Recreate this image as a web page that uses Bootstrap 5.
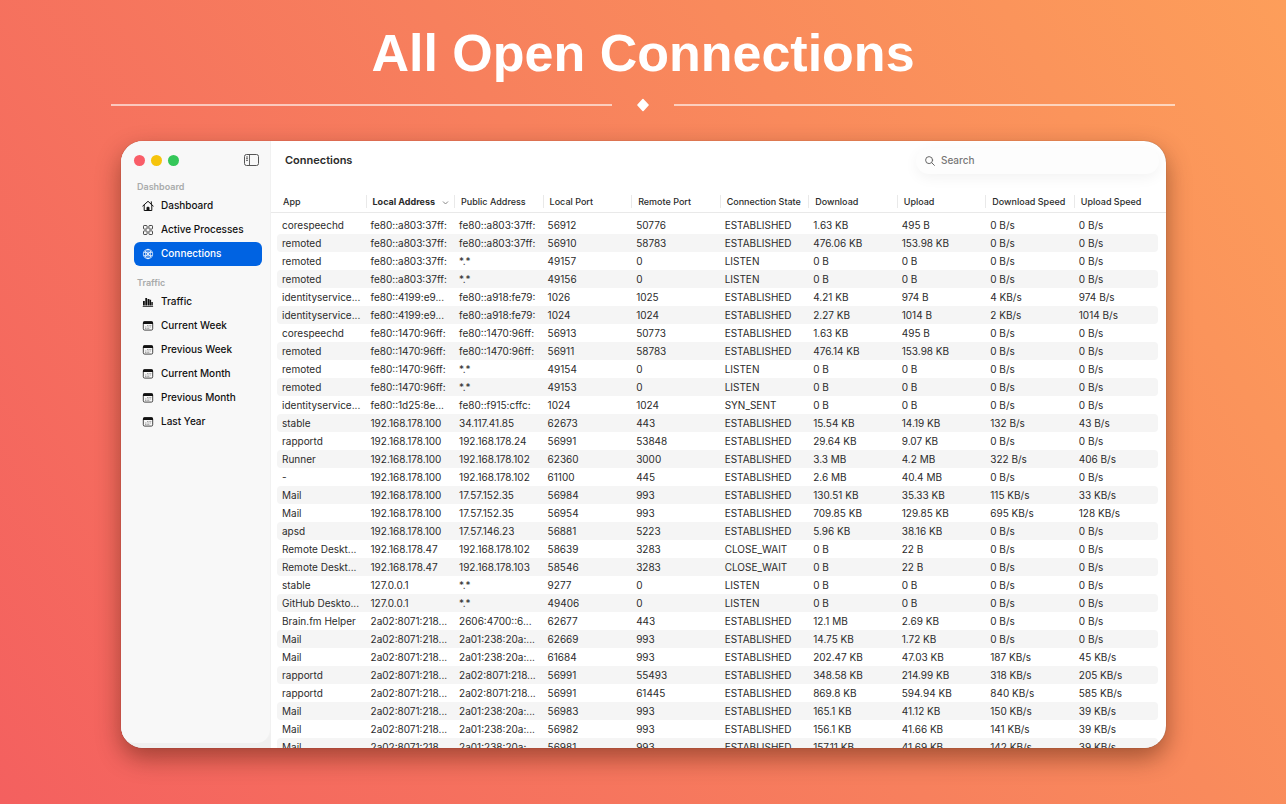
<!DOCTYPE html>
<html lang="en">
<head>
<meta charset="utf-8">
<meta name="viewport" content="width=device-width, initial-scale=1">
<title>All Open Connections</title>
<link href="https://cdn.jsdelivr.net/npm/bootstrap@5.3.0/dist/css/bootstrap.min.css" rel="stylesheet">
<style>
  body { font-family: Inter, "Liberation Sans", sans-serif; font-size: 10px; color: #2b2b2b;
    background: linear-gradient(58deg, #f4605f 0%, #f7805d 52%, #fd9e5a 100%); }
  .stage { padding: 0 120px 56px; }
  .headline { font: bold 52px/64px "Liberation Sans", sans-serif; margin: 21px 0 13px; }
  .divider { margin: 0 -9px 28px; gap: 24px; height: 15px; }
  .divider span { height: 2px; background: rgba(255,255,255,.6); }
  .app-window { border-radius: 22px; background: #fff; min-height: 0; margin-left: 1px;
    box-shadow: 0 0 1px rgba(0,0,0,.4), 0 10px 24px rgba(60,20,0,.45); }
  .sidebar-back { width: 150px; background: #f0f0f0; padding-bottom: 5px; }
  .sidebar { background: #f8f8f8; border-radius: 0 0 14px 14px; border-right: 1px solid #f1f1f1; padding: 0 8px 0 13px; }
  .side-top { height: 39px; padding-right: 3px; }
  .lights { gap: 6px; }
  .light { width: 11px; height: 11px; border-radius: 50%; }
  .light-close { background: #f95d68; }
  .light-min { background: #f6c40c; }
  .light-zoom { background: #35c759; }
  .group-label { font-size: 9px; font-weight: 600; line-height: 14px; color: #a9abab; padding-left: 3px; }
  .group-label.later { padding-top: 10px; }
  .side-link { height: 24px; border-radius: 6px; padding-left: 8px; gap: 7px; font-weight: 500; color: #111; text-decoration: none; }
  .side-link.active { background: #0063e2; color: #fff; }
  .titlebar { height: 38px; }
  .pane-title { font-size: 11px; font-weight: 600; line-height: 38px; margin: 0; padding-left: 14px; }
  .search-box { width: 243px; height: 26px; border-radius: 13px; padding: 0 9px; gap: 6px; margin: 7px 7px 0 0;
    background: #fdfdfd; box-shadow: 0 4px 14px rgba(0,0,0,.05); color: #666; }
  .search-box input { font-size: 10px; font-weight: 500; color: #666; outline: 0; }
  .search-box input::placeholder { color: #777; opacity: 1; }
  .grid-wrap { padding: 13px 8px 0 6px; background: linear-gradient(#e9e9e9, #e9e9e9) no-repeat 0 33px / 100% 1px; }
  .grid { table-layout: fixed; width: 100%; border-collapse: separate; border-spacing: 0; }
  .grid col { width: 10.05%; }
  .grid col:last-child { width: auto; }
  .grid th { height: 20px; padding: 0 0 0 6px; font-size: 9px; font-weight: 500; line-height: 20px; white-space: nowrap; }
  .grid th + th { background: linear-gradient(#e9e9e9, #e9e9e9) no-repeat 0 3px / 1px 13px; padding-left: 7px; }
  .grid th:nth-child(2) { font-weight: 700; }
  .grid th svg { float: right; margin: 8px 5px 0 0; }
  .grid tbody::before { content: ""; display: block; height: 4px; }
  .grid td { height: 18px; padding: 0 0 0 5px; line-height: 18px; white-space: nowrap; overflow: hidden; }
  .grid tbody tr:nth-child(even) td { background: #f5f5f5; }
  .grid td:first-child { border-radius: 4px 0 0 4px; }
  .grid td:last-child { border-radius: 0 4px 4px 0; }
</style>
</head>
<body>
<svg class="d-none">
  <symbol id="cal" viewBox="0 0 12 12"><rect x="1.3" y="1.7" width="9.4" height="8.4" rx="1.3" fill="none" stroke="#333" stroke-width=".9"/><path d="M1 2.6Q1.2 1.3 2.4 1.3h7.2Q10.8 1.3 11 2.6v1.5H1z" fill="#111"/><path d="M5 5.5h4.4M3 7h6.4M3 8.5h4.5" stroke="#999" stroke-width=".9" stroke-dasharray="1.1 .5"/></symbol>
</svg>
<main class="stage d-flex flex-column vh-100 overflow-hidden">
  <h1 class="headline text-white text-center">All Open Connections</h1>
  <div class="divider d-flex align-items-center">
    <span class="flex-fill"></span>
    <svg width="14" height="14" viewBox="0 0 14 14"><path d="M7 .8Q7.4.8 12.6 6.4Q13.2 7 12.6 7.6L7.6 13Q7 13.6 6.4 13L1.4 7.6Q.8 7 1.4 6.4L6.4 1z" fill="#fff"/></svg>
    <span class="flex-fill"></span>
  </div>
  <div class="app-window d-flex flex-fill overflow-hidden">
    <div class="sidebar-back d-flex flex-shrink-0">
      <nav class="sidebar flex-fill">
        <div class="side-top d-flex align-items-center">
          <div class="lights d-flex"><span class="light light-close"></span><span class="light light-min"></span><span class="light light-zoom"></span></div>
          <button class="btn p-0 border-0 ms-auto lh-1 d-flex" aria-label="Toggle sidebar"><svg width="15" height="12" viewBox="0 0 15 12" fill="none" stroke="#555"><rect x=".5" y=".5" width="14" height="11" rx="2"/><path d="M5.5.5v11M2 3h2M2 4.7h2M2 6.4h2" stroke-width=".9"/></svg></button>
        </div>
        <div class="group-label">Dashboard</div>
        <a href="#" class="side-link d-flex align-items-center"><svg width="12" height="12" viewBox="0 0 12 12" fill="none" stroke="#111"><path d="M.8 6 6 1.3 11.2 6M9.3 4V1.8M2.2 5.3v5.2h7.6V5.3" stroke-linecap="round" stroke-linejoin="round"/><path d="M5 10.5V7.3h2v3.2z" fill="#111"/></svg>Dashboard</a>
        <a href="#" class="side-link d-flex align-items-center"><svg width="12" height="12" viewBox="0 0 12 12" fill="none" stroke="#333" stroke-width=".9"><rect x="1.5" y="1.5" width="3.6" height="3.6" rx=".7"/><rect x="6.9" y="1.5" width="3.6" height="3.6" rx=".7"/><rect x="1.5" y="6.9" width="3.6" height="3.6" rx=".7"/><rect x="6.9" y="6.9" width="3.6" height="3.6" rx=".7"/></svg>Active Processes</a>
        <a href="#" class="side-link active d-flex align-items-center"><svg width="12" height="12" viewBox="0 0 12 12" fill="none" stroke="#fff" stroke-width=".7"><circle cx="6" cy="6" r="4.7"/><ellipse cx="6" cy="6" rx="2.4" ry="4.7"/><path d="M1.5 4.3Q6 5.8 10.5 4.3M1.5 7.7Q6 6.2 10.5 7.7M6 1.3v9.4M2.7 2.7l6.6 6.6M9.3 2.7 2.7 9.3"/></svg>Connections</a>
        <div class="group-label later">Traffic</div>
        <a href="#" class="side-link d-flex align-items-center"><svg width="12" height="12" viewBox="0 0 12 12" fill="#111"><path d="M1 5h1.8v4.6H1zM3.3 2h1.8v7.6H3.3zM5.6 3h1.8v6.6H5.6zM7.7 3.8h1.4v5.8H7.7zM9.4 6h1.4v3.6H9.4zM.7 9.9h10.4v.8H.7z"/></svg>Traffic</a>
        <a href="#" class="side-link d-flex align-items-center"><svg width="12" height="12"><use href="#cal"/></svg>Current Week</a>
        <a href="#" class="side-link d-flex align-items-center"><svg width="12" height="12"><use href="#cal"/></svg>Previous Week</a>
        <a href="#" class="side-link d-flex align-items-center"><svg width="12" height="12"><use href="#cal"/></svg>Current Month</a>
        <a href="#" class="side-link d-flex align-items-center"><svg width="12" height="12"><use href="#cal"/></svg>Previous Month</a>
        <a href="#" class="side-link d-flex align-items-center"><svg width="12" height="12"><use href="#cal"/></svg>Last Year</a>
      </nav>
    </div>
    <section class="flex-fill overflow-hidden">
      <header class="titlebar d-flex justify-content-between align-items-start">
        <h2 class="pane-title">Connections</h2>
        <label class="search-box d-flex align-items-center"><svg width="10" height="10" viewBox="0 0 10 10" fill="none" stroke="#666" stroke-linecap="round"><circle cx="4.1" cy="4.1" r="3.5"/><path d="M6.8 6.8 9.4 9.4"/></svg><input type="search" class="border-0 bg-transparent p-0 flex-fill" placeholder="Search" aria-label="Search"></label>
      </header>
      <div class="grid-wrap">
        <table class="grid">
          <colgroup><col><col><col><col><col><col><col><col><col><col></colgroup>
          <thead><tr><th>App</th><th>Local Address<svg width="7" height="6" viewBox="0 0 7 6" fill="none" stroke="#888"><path d="M1 1.5 3.5 4 6 1.5"/></svg></th><th>Public Address</th><th>Local Port</th><th>Remote Port</th><th>Connection State</th><th>Download</th><th>Upload</th><th>Download Speed</th><th>Upload Speed</th></tr></thead>
          <tbody id="rows"></tbody>
        </table>
      </div>
    </section>
  </div>
</main>
<script>
const E = 'ESTABLISHED', L = 'LISTEN', W = 'CLOSE_WAIT', Z = '0 B/s', f = 'fe80::a803:37ff:', g = 'fe80::1470:96ff:', h = '192.168.178.100', m = '2a02:8071:218...', n = '2a01:238:20a:...';
const data = [
['corespeechd',f,f,56912,50776,E,'1.63 KB','495 B',Z,Z],
['remoted',f,f,56910,58783,E,'476.06 KB','153.98 KB',Z,Z],
['remoted',f,'*.*',49157,0,L,'0 B','0 B',Z,Z],
['remoted',f,'*.*',49156,0,L,'0 B','0 B',Z,Z],
['identityservice...','fe80::4199:e9...','fe80::a918:fe79:',1026,1025,E,'4.21 KB','974 B','4 KB/s','974 B/s'],
['identityservice...','fe80::4199:e9...','fe80::a918:fe79:',1024,1024,E,'2.27 KB','1014 B','2 KB/s','1014 B/s'],
['corespeechd',g,g,56913,50773,E,'1.63 KB','495 B',Z,Z],
['remoted',g,g,56911,58783,E,'476.14 KB','153.98 KB',Z,Z],
['remoted',g,'*.*',49154,0,L,'0 B','0 B',Z,Z],
['remoted',g,'*.*',49153,0,L,'0 B','0 B',Z,Z],
['identityservice...','fe80::1d25:8e...','fe80::f915:cffc:',1024,1024,'SYN_SENT','0 B','0 B',Z,Z],
['stable',h,'34.117.41.85',62673,443,E,'15.54 KB','14.19 KB','132 B/s','43 B/s'],
['rapportd',h,'192.168.178.24',56991,53848,E,'29.64 KB','9.07 KB',Z,Z],
['Runner',h,'192.168.178.102',62360,3000,E,'3.3 MB','4.2 MB','322 B/s','406 B/s'],
['-',h,'192.168.178.102',61100,445,E,'2.6 MB','40.4 MB',Z,Z],
['Mail',h,'17.57.152.35',56984,993,E,'130.51 KB','35.33 KB','115 KB/s','33 KB/s'],
['Mail',h,'17.57.152.35',56954,993,E,'709.85 KB','129.85 KB','695 KB/s','128 KB/s'],
['apsd',h,'17.57.146.23',56881,5223,E,'5.96 KB','38.16 KB',Z,Z],
['Remote Deskt...','192.168.178.47','192.168.178.102',58639,3283,W,'0 B','22 B',Z,Z],
['Remote Deskt...','192.168.178.47','192.168.178.103',58546,3283,W,'0 B','22 B',Z,Z],
['stable','127.0.0.1','*.*',9277,0,L,'0 B','0 B',Z,Z],
['GitHub Deskto...','127.0.0.1','*.*',49406,0,L,'0 B','0 B',Z,Z],
['Brain.fm Helper',m,'2606:4700::6...',62677,443,E,'12.1 MB','2.69 KB',Z,Z],
['Mail',m,n,62669,993,E,'14.75 KB','1.72 KB',Z,Z],
['Mail',m,n,61684,993,E,'202.47 KB','47.03 KB','187 KB/s','45 KB/s'],
['rapportd',m,m,56991,55493,E,'348.58 KB','214.99 KB','318 KB/s','205 KB/s'],
['rapportd',m,m,56991,61445,E,'869.8 KB','594.94 KB','840 KB/s','585 KB/s'],
['Mail',m,n,56983,993,E,'165.1 KB','41.12 KB','150 KB/s','39 KB/s'],
['Mail',m,n,56982,993,E,'156.1 KB','41.66 KB','141 KB/s','39 KB/s'],
['Mail',m,n,56981,993,E,'157.11 KB','41.69 KB','142 KB/s','39 KB/s']];
document.getElementById('rows').innerHTML = data.map(r => '<tr>' + r.map(c => `<td>${c}</td>`).join('') + '</tr>').join('');
</script>
<script src="https://cdn.jsdelivr.net/npm/bootstrap@5.3.0/dist/js/bootstrap.bundle.min.js"></script>
</body>
</html>
